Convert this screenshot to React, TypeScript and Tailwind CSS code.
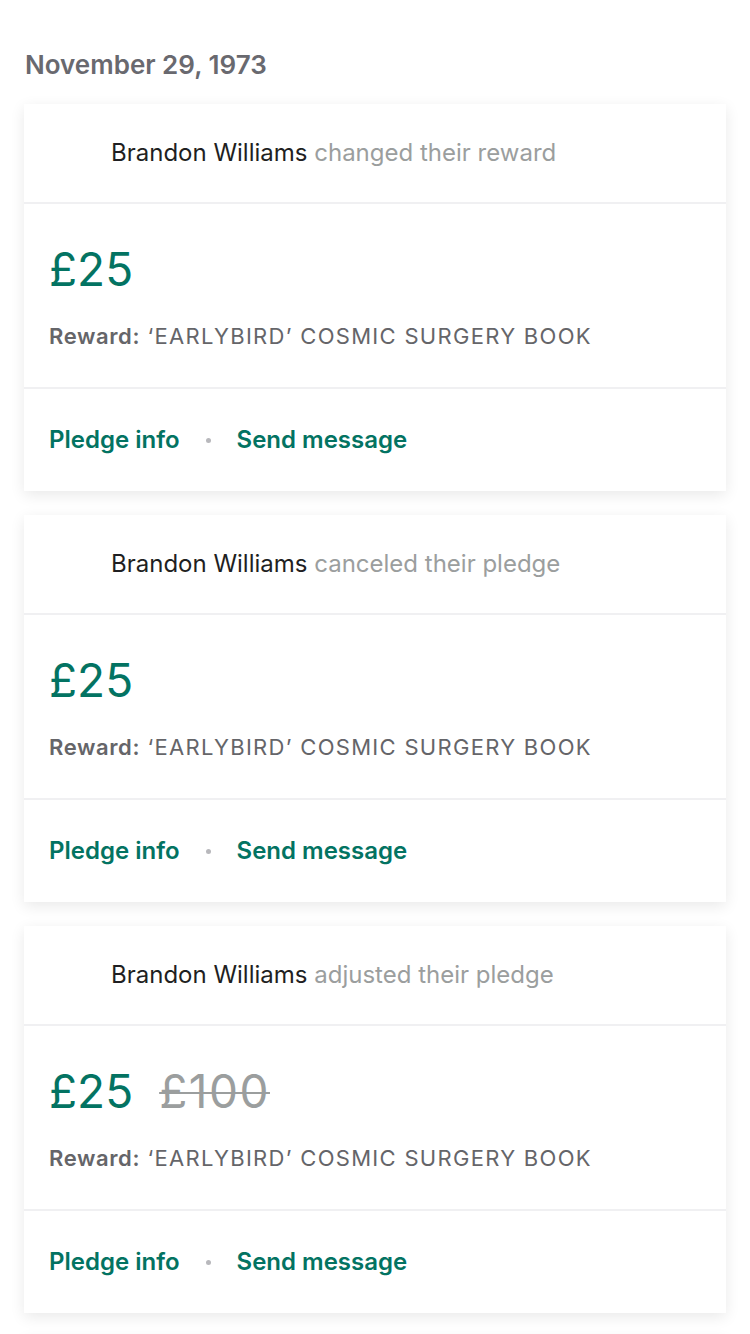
import React from "react";

type Activity = {
  action: string;
  amount: string;
  previous?: string;
};

const activities: Activity[] = [
  { action: "changed their reward", amount: "£25" },
  { action: "canceled their pledge", amount: "£25" },
  { action: "adjusted their pledge", amount: "£25", previous: "£100" },
];

function ActivityCard({ item }: { item: Activity }) {
  return (
    <div className="bg-white shadow-[0_4px_14px_rgba(0,0,0,0.09)]">
      <div className="h-[100px] flex items-center pl-[87px] border-b-2 border-[#f0f0f2]">
        <p className="text-[24px] tracking-[0px] leading-none">
          <span className="text-[#1f1f22]">Brandon Williams</span>{" "}
          <span className="text-[#9b9e9e]">{item.action}</span>
        </p>
      </div>
      <div className="h-[185px] px-[25px] border-b-2 border-[#f0f0f2]">
        <div className="flex items-baseline gap-[26px] pt-[40px]">
          <span className="text-[46px] leading-[50px] text-[#037362]">{item.amount}</span>
          {item.previous && (
            <span className="text-[46px] leading-[50px] tracking-[1.5px] text-[#9b9e9e] line-through decoration-2">
              {item.previous}
            </span>
          )}
        </div>
        <p className="mt-[31px] text-[22px] leading-none text-[#656569] tracking-[1.3px]">
          <span className="font-semibold tracking-[0.6px]">Reward:</span> ‘EARLYBIRD’ COSMIC SURGERY BOOK
        </p>
      </div>
      <div className="h-[102px] flex items-center px-[25px] text-[24px] font-semibold text-[#037362]">
        <span>Pledge info</span>
        <span className="mx-[26px] w-[5px] h-[5px] rounded-full bg-[#b8b8bc]" />
        <span>Send message</span>
      </div>
    </div>
  );
}

export default function App() {
  return (
    <div
      className="min-h-screen bg-white px-[24px] pt-[47px]"
      style={{ fontFamily: "Inter, 'Noto Sans', sans-serif" }}
    >
      <h2 className="pl-[1px] text-[26px] leading-[36px] font-semibold text-[#69696f]">
        November 29, 1973
      </h2>
      <div className="mt-[21px] flex flex-col gap-[24px]">
        {activities.map((item, i) => (
          <ActivityCard key={i} item={item} />
        ))}
        <div className="h-[80px] bg-white shadow-[0_4px_14px_rgba(0,0,0,0.09)]" />
      </div>
    </div>
  );
}
